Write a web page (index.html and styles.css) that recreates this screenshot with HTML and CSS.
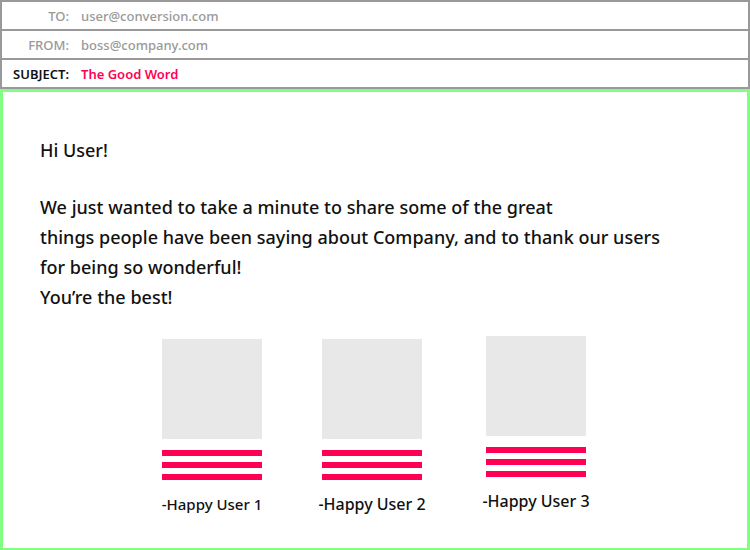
FILE: index.html
```html
<!DOCTYPE html>
<html>
<head>
<meta charset="utf-8">
<link rel="stylesheet" href="styles.css">
</head>
<body>
<div class="header">
  <div class="row"><span class="label">TO:</span><span class="value">user@conversion.com</span></div>
  <div class="row"><span class="label">FROM:</span><span class="value">boss@company.com</span></div>
  <div class="row"><span class="label label-dark">SUBJECT:</span><span class="value value-pink">The Good Word</span></div>
</div>
<div class="mail">
  <p class="greet">Hi User!</p>
  <p class="msg">We just wanted to take a minute to share some of the great<br>things people have been saying about Company, and to thank our users<br>for being so wonderful!<br>You’re the best!</p>
  <div class="cards">
    <div class="card card-1">
      <div class="photo"></div>
      <div class="bars"><span></span><span></span><span></span></div>
      <div class="name name-small">-Happy User 1</div>
    </div>
    <div class="card card-2">
      <div class="photo"></div>
      <div class="bars"><span></span><span></span><span></span></div>
      <div class="name">-Happy User 2</div>
    </div>
    <div class="card card-3">
      <div class="photo"></div>
      <div class="bars"><span></span><span></span><span></span></div>
      <div class="name">-Happy User 3</div>
    </div>
  </div>
</div>
</body>
</html>
```
FILE: styles.css
```css
* { box-sizing: border-box; }
html, body { margin: 0; padding: 0; }
body {
  width: 750px;
  height: 550px;
  overflow: hidden;
  background: #fff;
  font-family: "Noto Sans", "DejaVu Sans", sans-serif;
  font-weight: 500;
  color: #111;
}
.header {
  border: 2px solid #999;
  border-bottom: none;
}
.row {
  display: flex;
  align-items: center;
  height: 29px;
  border-bottom: 2px solid #999;
  font-size: 13px;
  font-weight: 500;
}
.label {
  width: 67px;
  text-align: right;
  color: #999;
}
.label-dark { color: #111; font-weight: 600; }
.value {
  margin-left: 12px;
  color: #999;
}
.value-pink { color: #ff0055; font-weight: 600; }
.mail {
  height: 462px;
  border: 3px solid #80ff80;
  padding: 43px 37px 0;
}
.greet {
  margin: 0;
  font-size: 18px;
  line-height: 30px;
}
.msg {
  margin: 27px 0 0;
  font-size: 18px;
  line-height: 30px;
  letter-spacing: 0.02px;
}
.cards {
  display: flex;
  margin-top: 27px;
  padding-left: 122px;
}
.card {
  width: 100px;
  display: flex;
  flex-direction: column;
  align-items: center;
}
.card-2 { margin-left: 60px; }
.card-3 { margin-left: 64px; margin-top: -3px; }
.photo {
  width: 100px;
  height: 100px;
  background: #e8e8e8;
}
.bars {
  margin-top: 11px;
  width: 100px;
  display: flex;
  flex-direction: column;
  gap: 6px;
}
.bars span {
  display: block;
  height: 6px;
  background: #ff0055;
}
.name {
  margin-top: 13px;
  font-size: 16px;
  white-space: nowrap;
}
.name-small {
  margin-top: 14px;
  font-size: 15px;
}
```
